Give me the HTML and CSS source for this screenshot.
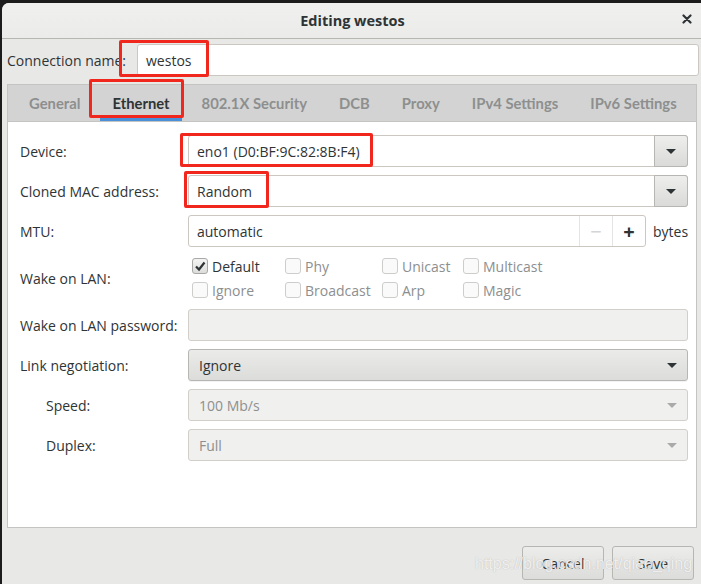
FILE: index.html
```html
<!DOCTYPE html>
<html>
<head>
<meta charset="utf-8">
<link rel="stylesheet" href="styles.css">
</head>
<body>
<div class="window">
  <div class="titlebar">
    <span class="title">Editing westos</span>
    <span class="close">
      <svg width="10" height="10" viewBox="0 0 10 10"><path d="M1.5 1.5 L8.5 8.5 M8.5 1.5 L1.5 8.5" stroke="#2e3436" stroke-width="2.2" stroke-linecap="round"/></svg>
    </span>
  </div>
  <div class="content">
    <div class="name-row">
      <span class="lbl">Connection name:</span>
      <div class="entry name-entry">westos</div>
    </div>
    <div class="notebook">
      <div class="tabs">
        <div class="tab">General</div>
        <div class="tab active">Ethernet</div>
        <div class="tab">802.1X Security</div>
        <div class="tab">DCB</div>
        <div class="tab">Proxy</div>
        <div class="tab">IPv4 Settings</div>
        <div class="tab">IPv6 Settings</div>
      </div>
      <div class="page">
        <div class="form">
          <span class="lbl">Device:</span>
          <div class="combo entry"><span class="val">eno1 (D0:BF:9C:82:8B:F4)</span><span class="drop"><i class="arrow"></i></span></div>

          <span class="lbl">Cloned MAC address:</span>
          <div class="combo entry"><span class="val">Random</span><span class="drop"><i class="arrow"></i></span></div>

          <span class="lbl">MTU:</span>
          <div class="mtu">
            <div class="spin entry"><span class="val">automatic</span><span class="sbtn minus">−</span><span class="sbtn plus">+</span></div>
            <span class="lbl">bytes</span>
          </div>

          <span class="lbl">Wake on LAN:</span>
          <div class="checks">
            <label class="chk on"><span class="box"><svg width="12" height="12" viewBox="0 0 12 12"><path d="M2 6.5 L5 9.5 L10.5 2.5" fill="none" stroke="#2e3436" stroke-width="2.2"/></svg></span>Default</label>
            <label class="chk"><span class="box"></span>Phy</label>
            <label class="chk"><span class="box"></span>Unicast</label>
            <label class="chk"><span class="box"></span>Multicast</label>
            <label class="chk"><span class="box"></span>Ignore</label>
            <label class="chk"><span class="box"></span>Broadcast</label>
            <label class="chk"><span class="box"></span>Arp</label>
            <label class="chk"><span class="box"></span>Magic</label>
          </div>

          <span class="lbl">Wake on LAN password:</span>
          <div class="entry disabled"></div>

          <span class="lbl">Link negotiation:</span>
          <div class="button-combo"><span class="val">Ignore</span><i class="arrow"></i></div>

          <span class="lbl sub">Speed:</span>
          <div class="button-combo disabled"><span class="val">100 Mb/s</span><i class="arrow"></i></div>

          <span class="lbl sub">Duplex:</span>
          <div class="button-combo disabled"><span class="val">Full</span><i class="arrow"></i></div>
        </div>
      </div>
    </div>
    <div class="actions">
      <div class="btn cancel">Cancel</div>
      <div class="btn save">Save</div>
    </div>
  </div>
  <div class="mark m1"></div>
  <div class="mark m2"></div>
  <div class="mark m3"></div>
  <div class="mark m4"></div>
  <div class="watermark">https://blog.csdn.net/qiao_qing</div>
</div>
</body>
</html>
```
FILE: styles.css
```css
* { box-sizing: border-box; }
html, body { margin: 0; padding: 0; }
body {
  background: #1c1c1c;
  width: 701px;
  height: 584px;
  overflow: hidden;
  font-family: "Open Sans", "Noto Sans", sans-serif;
  font-size: 14px;
  color: #2e3436;
}
.window {
  position: relative;
  margin: 3px 0 0 2px;
  width: 699px;
  height: 581px;
  background: #e8e8e7;
  border-top-left-radius: 7px;
  display: flex;
  flex-direction: column;
}
.titlebar {
  height: 36px;
  flex: none;
  background: linear-gradient(#f0f0ef, #ebebea);
  border-top-left-radius: 7px;
  border-bottom: 1px solid #b6b6b3;
  display: flex;
  align-items: center;
  justify-content: center;
  position: relative;
}
.title { font-weight: bold; font-size: 14.5px; margin-left: 2px; }
.close {
  position: absolute;
  right: 9px;
  top: 11px;
  width: 10px;
  height: 10px;
  display: flex;
}
.content {
  flex: 1;
  display: flex;
  flex-direction: column;
  padding: 5px 2px 0 5px;
}
.name-row {
  display: flex;
  align-items: center;
  height: 32px;
  gap: 11px;
}
.lbl { white-space: nowrap; }
.entry {
  height: 32px;
  background: #fff;
  border: 1px solid #cdc7c2;
  border-radius: 3px;
  display: flex;
  align-items: center;
}
.name-entry { flex: 1; padding-left: 8px; }
.notebook {
  margin: 8px 2px 0 0;
  width: 690px;
  display: flex;
  flex-direction: column;
}
.tabs {
  height: 37px;
  background: #d3d3d3;
  border: 1px solid #c4c4c2;
  border-bottom: none;
  display: flex;
  gap: 8px;
  padding-left: 9px;
}
.tab {
  padding: 3px 12px 0;
  display: flex;
  align-items: center;
  white-space: nowrap;
  font-family: "Lato", "Open Sans", sans-serif;
  font-weight: bold;
  font-size: 14.8px;
  color: #8d8f8f;
  border-bottom: 3px solid transparent;
}
.tab.active { color: #2e3436; border-bottom-color: #4a90d9; }
.page {
  height: 407px;
  background: #fff;
  border: 1px solid #c4c4c2;
  padding: 13px 10px 0 12px;
}
.form {
  display: grid;
  grid-template-columns: 168px 1fr;
  row-gap: 8px;
  align-items: center;
}
.lbl.sub { padding-left: 26px; }
.combo { justify-content: space-between; }
.val { padding-left: 8px; }
.drop {
  width: 34px;
  height: 32px;
  margin: -1px -1px -1px 0;
  background: linear-gradient(#eeeeed, #dadad9);
  border: 1px solid #b6b6b3;
  border-radius: 0 3px 3px 0;
  display: flex;
  align-items: center;
  justify-content: center;
}
.arrow {
  width: 0; height: 0;
  border-left: 5px solid transparent;
  border-right: 5px solid transparent;
  border-top: 5px solid #2e3436;
}
.mtu { display: flex; align-items: center; gap: 7px; }
.spin { width: 458px; }
.spin .val { flex: 1; }
.sbtn {
  width: 33px;
  height: 30px;
  border-left: 1px solid #e4e4e4;
  display: flex;
  align-items: center;
  justify-content: center;
  font-size: 20px;
  font-weight: bold;
}
.sbtn.minus { color: #d5d5d5; font-weight: normal; }
.checks {
  display: grid;
  grid-template-columns: 93px 97px 81px 1fr;
  grid-auto-rows: 22px;
  row-gap: 2px;
  padding: 0 0 0 4px;
  margin: 0;
}
.chk {
  display: flex;
  align-items: center;
  gap: 4px;
  color: #8d8f8f;
}
.chk.on { color: #2e3436; }
.box {
  width: 16px;
  height: 16px;
  border: 1px solid #cdcdcb;
  border-radius: 3px;
  background: #fafafa;
  display: flex;
  align-items: center;
  justify-content: center;
}
.chk.on .box { border-color: #a8a8a6; background: linear-gradient(#f4f4f4, #dddddc); }
.entry.disabled { background: #f0f0ef; border-color: #d2ceca; }
.button-combo {
  height: 32px;
  background: linear-gradient(#ebebea, #dcdcdb);
  border: 1px solid #b6b6b3;
  border-radius: 3px;
  display: flex;
  align-items: center;
  justify-content: space-between;
  padding-right: 10px;
  box-shadow: 0 1px 0 rgba(0,0,0,0.05);
}
.button-combo .val { padding-left: 10px; }
.button-combo.disabled {
  background: #f0f0ef;
  border-color: #d2ceca;
  color: #8d8f8f;
  box-shadow: none;
}
.button-combo.disabled .arrow { border-top-color: #a9abab; }
.actions {
  display: flex;
  justify-content: flex-end;
  gap: 8px;
  padding: 18px 5px 0 0;
}
.btn {
  height: 34px;
  width: 82px;
  background: linear-gradient(#ececeb, #dcdcdb);
  border: 1px solid #b6b6b3;
  border-radius: 3px;
  display: flex;
  align-items: center;
  justify-content: center;
}
.mark {
  position: absolute;
  border: 3px solid #f1261c;
  border-radius: 2px;
}
.m1 { left: 117px; top: 37px; width: 90px; height: 37px; }
.m2 { left: 87px; top: 76px; width: 95px; height: 39px; }
.m3 { left: 178px; top: 130px; width: 193px; height: 34px; }
.m4 { left: 182px; top: 168px; width: 85px; height: 37px; }
.watermark {
  position: absolute;
  left: 473px;
  top: 552px;
  font-family: "Liberation Sans", sans-serif;
  font-size: 16px;
  color: rgba(255,255,255,0.8);
  text-shadow: 0 0 1px rgba(120,120,120,0.5);
  white-space: nowrap;
}
```
